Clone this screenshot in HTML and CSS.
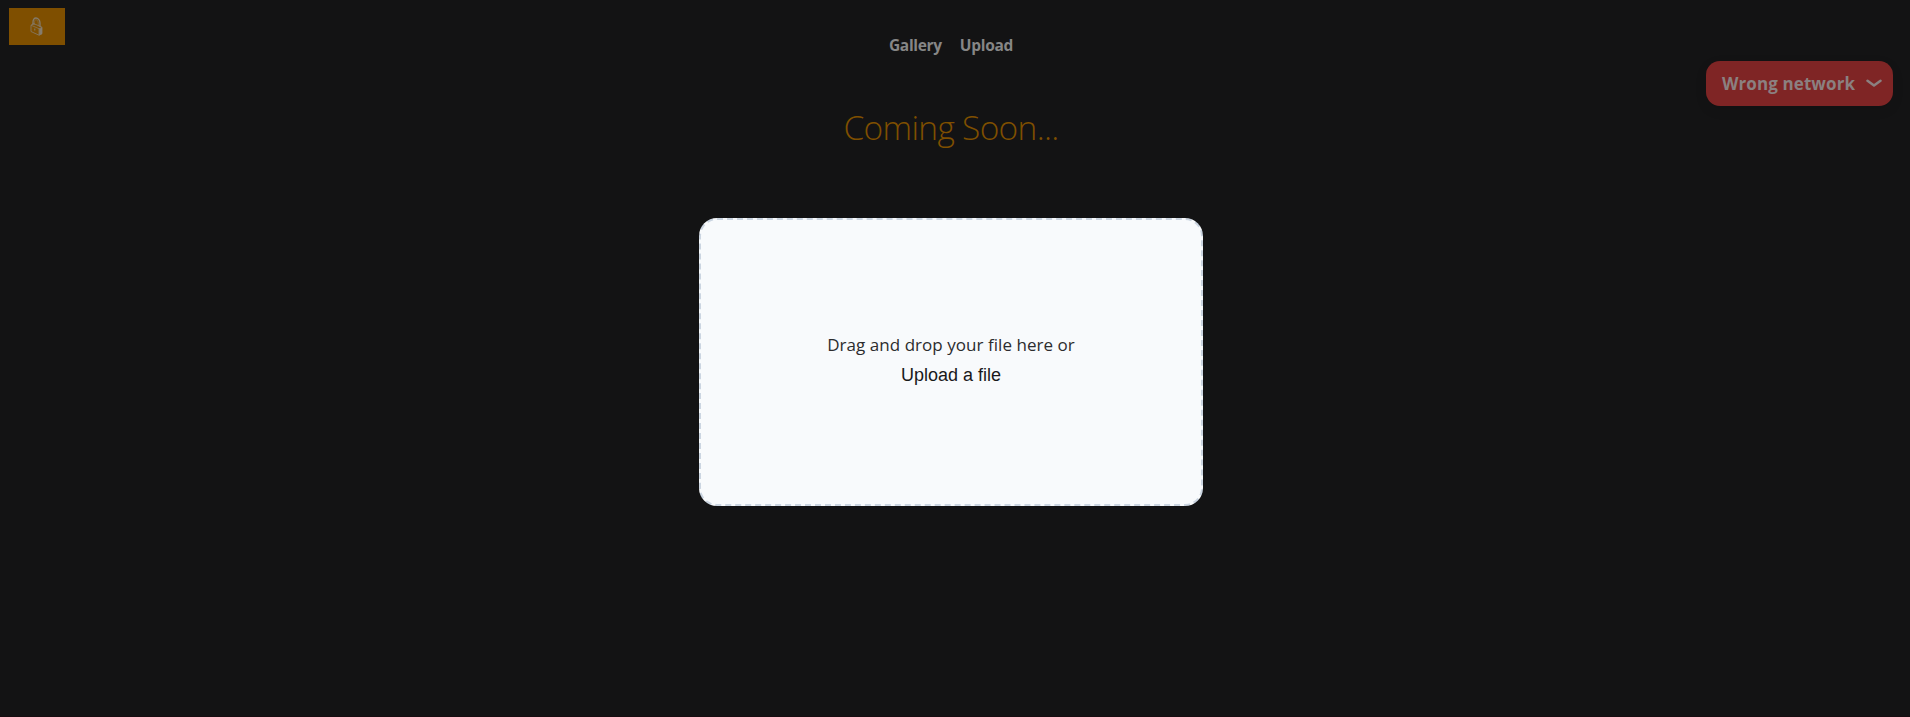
FILE: index.html
```html
<!DOCTYPE html>
<html lang="en">
<head>
<meta charset="utf-8">
<title>Upload</title>
<link rel="stylesheet" href="styles.css">
</head>
<body>
<header class="header">
  <a class="logo" href="#" aria-label="Home">
    <svg class="lock" viewBox="0 0 14 20" fill="none" stroke="currentColor">
      <path d="M3 8V5.2C3 2.5 4.2 1 6 1s4 2.2 4 5v4" stroke-width="1.3"/>
      <path d="M4.5 8V5.5C4.500 3.500 5.200 2.700 6 2.700s2.300 1.200 2.300 3.500v3" stroke-width=".5"/>
      <path d="M1 8.200 3.500 6.500 12 10.200v6.500L9.200 18.300 1 14.500z" stroke-width=".8"/>
      <path d="M1 8.200 9 11.700V18M9 11.700l3-1.500" stroke-width=".7"/>
      <path d="M9.200 12 12 10.300V17l-2.800 1.300z" fill="currentColor" stroke="none"/>
      <path d="M4.800 11.500v2" stroke-width="1"/>
    </svg>
  </a>
  <nav class="nav"><a class="link gallery" href="#">Gallery</a><a class="link upload" href="#">Upload</a></nav>
  <button class="network"><span class="network-label">Wrong network</span>
    <svg class="chevron" viewBox="0 0 16 9" fill="none" stroke="currentColor" stroke-width="2.5" stroke-linecap="round" stroke-linejoin="round"><path d="M1.500 1.700 8 6.500l6.500-4.800"/></svg>
  </button>
</header>
<main class="main">
  <h1 class="title">Coming Soon...</h1>
  <section class="dropzone">
    <p class="hint">Drag and drop your file here or</p>
    <button class="pick">Upload a file</button>
  </section>
</main>
</body>
</html>
```
FILE: styles.css
```css
* { box-sizing: border-box; }
body {
  margin: 0;
  height: 717px;
  padding-right: 8px;
  overflow: hidden;
  border-bottom: 1px solid #170c10;
  background: #131314;
  font-family: "Open Sans", "Noto Sans", sans-serif;
}
.header {
  display: grid;
  grid-template-columns: 1fr auto 1fr;
  align-items: start;
  height: 106px;
}
.logo {
  display: flex;
  align-items: center;
  justify-content: center;
  width: 56px;
  height: 37px;
  margin: 8px 0 0 9px;
  background: #7f4f00;
  color: #857b6b;
}
.lock { width: 14px; height: 20px; }
.nav {
  display: flex;
  gap: 18px;
  margin-top: 34px;
  font-size: 15.500px;
  font-weight: 700;
  line-height: 22px;
  letter-spacing: -.3px;
}
.link { color: #868686; text-decoration: none; }
.network {
  display: flex;
  justify-self: end;
  align-items: center;
  justify-content: space-between;
  width: 187px;
  height: 45px;
  margin: 61px 9px 0 0;
  padding: 0 11px 0 16px;
  border: 0;
  border-radius: 14px;
  background: #7f2525;
  box-shadow: 0 4px 12px rgba(0, 0, 0, .1);
  color: #8b8080;
  font: 700 17px/24px "Open Sans", "Noto Sans", sans-serif;
  letter-spacing: .1px;
}
.network-label { white-space: nowrap; }
.chevron { width: 16px; height: 9px; }
.main { display: flex; flex-direction: column; align-items: center; }
.title {
  margin: -3px 0 67px;
  color: #7f4f00;
  font-size: 33.500px;
  font-weight: 300;
  line-height: 48px;
  letter-spacing: -.7px;
}
.dropzone {
  display: flex;
  flex-direction: column;
  align-items: center;
  justify-content: center;
  width: 504px;
  height: 288px;
  padding-bottom: 4px;
  border: 2px dashed #cbd5e1;
  border-radius: 18px;
  background: #f8fafc;
  color: #18181a;
}
.hint { margin: 0; color: #2c2c2e; font-size: 17px; font-weight: 400; line-height: 30px; letter-spacing: .04px; }
.pick {
  padding: 0;
  border: 0;
  background: none;
  color: inherit;
  font: 18px/30px "Liberation Sans", Arial, sans-serif;
}
```
